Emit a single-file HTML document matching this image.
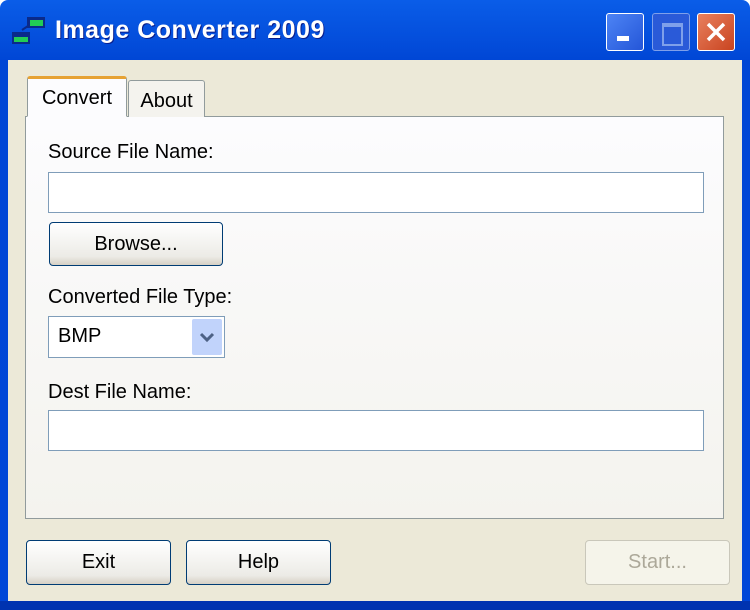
<!DOCTYPE html><html><head><style>
body{margin:0;width:750px;height:610px;overflow:hidden;font-family:"Liberation Sans",sans-serif;background:#fff}
.win{position:absolute;left:0;top:0;width:750px;height:610px;background:linear-gradient(#0a5de8,#0046d5 10%,#0047d8);border-radius:8px 8px 0 0}
.title{position:absolute;left:55px;top:16px;color:#fff;font-weight:bold;font-size:25px;text-shadow:1px 1px #0a1e8c;letter-spacing:0.5px}
.body{position:absolute;left:8px;top:60px;width:734px;height:541px;background:#ece9d8}
.panel{position:absolute;left:17px;top:56px;width:697px;height:401px;border:1px solid #919b9c;background:linear-gradient(#fcfcfe,#f4f3ee)}
.tab{position:absolute;border:1px solid #919b9c;border-bottom:none;font-size:20px;color:#000;text-align:center;border-radius:3px 3px 0 0}
.lbl{position:absolute;font-size:20px;color:#000}
.inp{position:absolute;background:#fff;border:1px solid #7f9db9}
.btn{position:absolute;border:1px solid #003c74;border-radius:4px;background:linear-gradient(#fff,#ecebe6 80%,#d6d0c5);font-size:20px;text-align:center;box-sizing:border-box}
.cb{position:absolute;width:22px;height:22px;border:1px solid #fff;border-radius:3px;box-sizing:border-box}
</style></head><body>
<div class="win">
<svg style="position:absolute;left:10px;top:15px" width="36" height="32"><rect x="17" y="2" width="18" height="11" fill="#0a2a8a"/><rect x="20" y="5" width="13" height="6" fill="#22cc55"/><rect x="2" y="17" width="18" height="12" fill="#0a2a8a"/><rect x="4" y="22" width="14" height="5" fill="#22cc55"/><path d="M12 15 L18 11" stroke="#0a2a8a" stroke-width="2"/></svg>
<div class="title">Image Converter 2009</div>
<div class="cb" style="left:606px;top:13px;width:38px;height:38px;background:linear-gradient(135deg,#4d84f5,#2456d8)"><div style="position:absolute;left:10px;top:22px;width:12px;height:5px;background:#fff"></div></div>
<div class="cb" style="left:652px;top:13px;width:38px;height:38px;background:#2a5ad8;border-color:#7fa0ea"><div style="position:absolute;left:9px;top:9px;width:17px;height:17px;border:2px solid #7fa0ea;border-top-width:4px"></div></div>
<div class="cb" style="left:697px;top:13px;width:38px;height:38px;background:linear-gradient(135deg,#e8805e,#c94420)"><svg width="36" height="36"><path d="M10 10L26 26M26 10L10 26" stroke="#fff" stroke-width="3.5"/></svg></div>
<div class="body">
<div class="panel"></div>
<div class="tab" style="left:120px;top:20px;width:75px;height:36px;background:#f4f3ee;line-height:40px">About</div>
<div class="tab" style="left:19px;top:16px;width:100px;height:41px;background:#fcfcfe;border-top:3px solid #e6a234;line-height:38px;box-sizing:border-box;border-bottom:1px solid #fcfcfe">Convert</div>
<div class="lbl" style="left:40px;top:81px">Source File Name:</div>
<div class="inp" style="left:40px;top:112px;width:654px;height:39px"></div>
<div class="btn" style="left:41px;top:162px;width:174px;height:44px;line-height:42px">Browse...</div>
<div class="lbl" style="left:40px;top:226px">Converted File Type:</div>
<div class="inp" style="left:40px;top:256px;width:175px;height:40px"><span style="position:absolute;left:9px;top:8px;font-size:20px">BMP</span><div style="position:absolute;right:2px;top:2px;width:30px;height:36px;background:#c1d3fb;border-radius:2px"><svg width="30" height="36"><path d="M9 15l6 6 6-6" stroke="#4d6185" stroke-width="3" fill="none"/></svg></div></div>
<div class="lbl" style="left:40px;top:321px">Dest File Name:</div>
<div class="inp" style="left:40px;top:350px;width:654px;height:39px"></div>
<div class="btn" style="left:18px;top:480px;width:145px;height:45px;line-height:43px">Exit</div>
<div class="btn" style="left:178px;top:480px;width:145px;height:45px;line-height:43px">Help</div>
<div class="btn" style="left:577px;top:480px;width:145px;height:45px;line-height:43px;border-color:#c9c7ba;background:#f5f4ea;color:#aca899">Start...</div>
</div>
<div style="position:absolute;left:0;top:601px;width:750px;height:9px;background:#0033b0"></div>
</div>
</body></html>
